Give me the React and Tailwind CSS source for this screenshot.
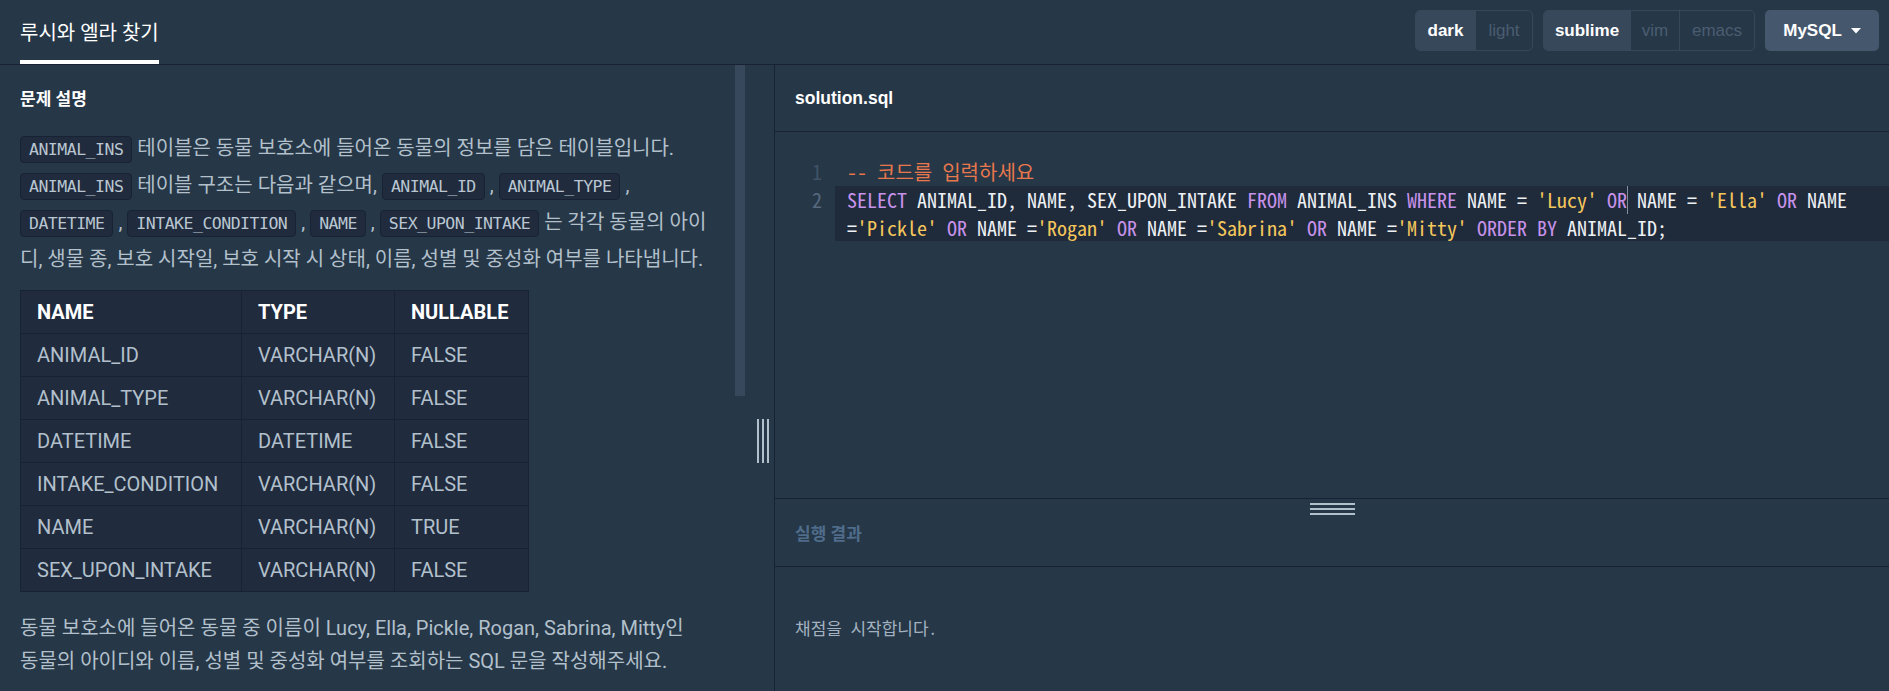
const columns = [
  ['ANIMAL_ID', 'VARCHAR(N)', 'FALSE'],
  ['ANIMAL_TYPE', 'VARCHAR(N)', 'FALSE'],
  ['DATETIME', 'DATETIME', 'FALSE'],
  ['INTAKE_CONDITION', 'VARCHAR(N)', 'FALSE'],
  ['NAME', 'VARCHAR(N)', 'TRUE'],
  ['SEX_UPON_INTAKE', 'VARCHAR(N)', 'FALSE'],
];

function Chip({ children }) {
  return (
    <code className="inline-block my-[5px] rounded-[4px] border border-[#172334] bg-[#202b3d] px-[8px] py-[3px] font-['DejaVu_Sans_Mono',monospace] text-[16.5px] leading-[19px] tracking-[-0.5px] text-[#b9c6d1]">
      {children}
    </code>
  );
}

function Segment({ items, active }) {
  return (
    <div className="flex h-[41px] overflow-hidden rounded-[5px] border border-[#37485b]">
      {items.map(([label, w], i) => (
        <div
          key={label}
          className={`flex items-center justify-center ${w} ${i > 0 ? 'border-l border-[#37485b]' : ''} ${
            i === active ? 'bg-[#37485b] font-bold text-white' : 'text-[#4b5d71]'
          }`}
        >
          {label}
        </div>
      ))}
    </div>
  );
}

function Header() {
  return (
    <div className="flex h-[65px] shrink-0 items-stretch justify-between border-b border-[#172334] pl-[20px] pr-[10px]">
      <div className="flex items-center border-b-[4px] border-white pt-[6px] text-[20px] text-white">
        루시와 엘라 찾기
      </div>
      <div className="flex items-center gap-[10px] pb-[3px] font-['Liberation_Sans',Arial,sans-serif] text-[17px]">
        <Segment items={[['dark', 'w-[59px]'], ['light', 'w-[57px]']]} active={0} />
        <Segment items={[['sublime', 'w-[86px]'], ['vim', 'w-[49px]'], ['emacs', 'w-[75px]']]} active={0} />
        <button className="flex h-[41px] w-[114px] items-center justify-center gap-[9px] rounded-[5px] bg-[#44576c] font-bold text-white">
          MySQL
          <svg width="10" height="6" viewBox="0 0 10 6">
            <path d="M0 0h10L5 5.5z" fill="#ffffff" />
          </svg>
        </button>
      </div>
    </div>
  );
}

function ProblemPanel() {
  return (
    <div className="flex w-[775px] shrink-0 border-r border-[#172334]">
      <div className="w-[735px] shrink-0 overflow-hidden pl-[20px] pr-[15px] pt-[22px] text-[20px] text-[#b2c0cc]">
        <h5 className="text-[17px] font-bold leading-[24px] text-white">문제 설명</h5>
        <p className="mt-[20px] leading-[34px]">
          <Chip>ANIMAL_INS</Chip> 테이블은 동물 보호소에 들어온 동물의 정보를 담은 테이블입니다.
        </p>
        <p className="leading-[34px]">
          <Chip>ANIMAL_INS</Chip> 테이블 구조는 다음과 같으며, <Chip>ANIMAL_ID</Chip> , <Chip>ANIMAL_TYPE</Chip> ,{' '}
          <Chip>DATETIME</Chip> , <Chip>INTAKE_CONDITION</Chip> , <Chip>NAME</Chip> , <Chip>SEX_UPON_INTAKE</Chip> 는
          각각 동물의 아이디, 생물 종, 보호 시작일, 보호 시작 시 상태, 이름, 성별 및 중성화 여부를 나타냅니다.
        </p>
        <table className="mt-[14px] border-collapse bg-[#202b3d]">
          <thead>
            <tr className="h-[43px]">
              <th className="w-[221px] border border-[#172334] px-[16px] text-left font-bold text-white">NAME</th>
              <th className="w-[153px] border border-[#172334] px-[16px] text-left font-bold text-white">TYPE</th>
              <th className="w-[134px] border border-[#172334] px-[16px] text-left font-bold text-white">NULLABLE</th>
            </tr>
          </thead>
          <tbody>
            {columns.map((row) => (
              <tr key={row[0]} className="h-[43px]">
                {row.map((cell, i) => (
                  <td key={i} className="border border-[#172334] px-[16px]">
                    {cell}
                  </td>
                ))}
              </tr>
            ))}
          </tbody>
        </table>
        <p className="mt-[20px] break-keep leading-[33px]">
          동물 보호소에 들어온 동물 중 이름이 Lucy, Ella, Pickle, Rogan, Sabrina, Mitty인 동물의 아이디와 이름, 성별 및
          중성화 여부를 조회하는 SQL 문을 작성해주세요.
        </p>
      </div>
      <div className="w-[10px] shrink-0">
        <div className="h-[331px] bg-[#37475c]" />
      </div>
      <div className="flex-1 pl-[12px] pt-[354px]">
        <div className="flex h-[44px] gap-[3px]">
          <div className="w-[2px] bg-[#b2c0cc]" />
          <div className="w-[2px] bg-[#b2c0cc]" />
          <div className="w-[2px] bg-[#b2c0cc]" />
        </div>
      </div>
    </div>
  );
}

const kw = 'text-[#c792ea]';
const str = 'text-[#f5c75b]';

function EditorPanel() {
  return (
    <div className="flex min-w-0 flex-1 flex-col">
      <div className="flex h-[67px] shrink-0 items-center border-b border-[#172334] px-[20px] font-['Liberation_Sans',Arial,sans-serif] text-[17.5px] font-bold text-white">
        solution.sql
      </div>
      <div className="h-[367px] shrink-0 border-b border-[#172334] pt-[26px] font-['Noto_Sans_Mono_CJK_KR',monospace] text-[20px] leading-[27.5px] text-[#eef1f4]">
        <div className="flex">
          <div className="w-[60px] shrink-0 pr-[13px] text-right text-[#3f5266]">1</div>
          <div className="flex-1 pl-[12px] text-[#e8774d]">-- 코드를 입력하세요</div>
        </div>
        <div className="flex">
          <div className="w-[60px] shrink-0 pr-[13px] text-right text-[#56697d]">2</div>
          <div className="flex-1 whitespace-pre-wrap bg-[#1f2a3b] pl-[12px]">
            <span className={kw}>SELECT</span> ANIMAL_ID, NAME, SEX_UPON_INTAKE <span className={kw}>FROM</span> ANIMAL_INS{' '}
            <span className={kw}>WHERE</span> NAME = <span className={str}>'Lucy'</span> <span className={kw}>OR</span>
            <span className="-mr-px inline-block h-[28px] w-px bg-[#7d8e9f] align-top" /> NAME ={' '}
            <span className={str}>'Ella'</span> <span className={kw}>OR</span> NAME =<span className={str}>'Pickle'</span>{' '}
            <span className={kw}>OR</span> NAME =<span className={str}>'Rogan'</span> <span className={kw}>OR</span> NAME =
            <span className={str}>'Sabrina'</span> <span className={kw}>OR</span> NAME =<span className={str}>'Mitty'</span>{' '}
            <span className={kw}>ORDER BY</span> ANIMAL_ID;
          </div>
        </div>
      </div>
      <div className="h-[68px] shrink-0 border-b border-[#172334] px-[20px]">
        <div className="flex justify-center pt-[4px]">
          <div className="flex w-[45px] flex-col gap-[3px]">
            <div className="h-[2px] bg-[#b2c0cc]" />
            <div className="h-[2px] bg-[#b2c0cc]" />
            <div className="h-[2px] bg-[#b2c0cc]" />
          </div>
        </div>
        <div className="mt-[7px] text-[17px] font-bold leading-[24px] text-[#4f6d8b]">실행 결과</div>
      </div>
      <div className="px-[20px] pt-[49px] font-['Noto_Sans_Mono_CJK_KR',monospace] text-[17px] leading-[24px] text-[#a3b2c0]">
        채점을 시작합니다.
      </div>
    </div>
  );
}

export default function App() {
  return (
    <div className="flex h-[691px] w-full flex-col overflow-hidden bg-[#263747] font-['Roboto','Noto_Sans_CJK_KR',sans-serif]">
      <Header />
      <div className="flex min-h-0 flex-1">
        <ProblemPanel />
        <EditorPanel />
      </div>
    </div>
  );
}
